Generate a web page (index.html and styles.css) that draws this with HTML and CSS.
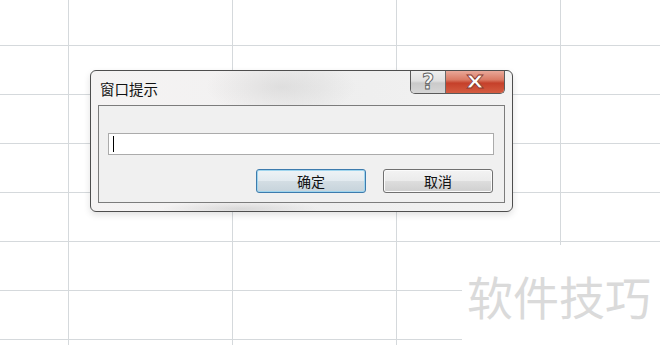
FILE: index.html
```html
<!DOCTYPE html>
<html lang="zh-CN">
<head>
<meta charset="utf-8">
<title>窗口提示</title>
<link rel="stylesheet" href="styles.css">
</head>
<body>
<div class="sheet">
  <div class="dialog">
    <div class="titlebar">
      <div class="title">窗口提示</div>
      <div class="caption-buttons">
        <div class="cap-btn help"><span>?</span></div>
        <div class="cap-btn close"><span>X</span></div>
      </div>
    </div>
    <div class="client">
      <div class="textbox"><span class="caret"></span></div>
      <div class="actions">
        <div class="btn default">确定</div>
        <div class="btn">取消</div>
      </div>
    </div>
  </div>
  <div class="watermark">软件技巧</div>
</div>
</body>
</html>
```

FILE: styles.css
```css
html, body {
  margin: 0;
  padding: 0;
  background: #ffffff;
}

.sheet {
  position: relative;
  width: 660px;
  height: 345px;
  overflow: hidden;
  background-color: #ffffff;
  background-image:
    linear-gradient(to right, #d5d9dc 1px, transparent 1px),
    linear-gradient(to bottom, #d5d9dc 1px, transparent 1px);
  background-size: 164px 100%, 100% 49px;
  background-position: 68px 0, 0 45px;
  font-family: "Noto Sans CJK SC", "Noto Sans", sans-serif;
}

.dialog {
  position: absolute;
  left: 90px;
  top: 70px;
  width: 423px;
  height: 142px;
  box-sizing: border-box;
  border: 1px solid #4e4e4e;
  border-radius: 6px;
  padding: 0 7px 8px 7px;
  display: flex;
  flex-direction: column;
  background:
    radial-gradient(ellipse 75px 30px at 190px 16px, rgba(175, 175, 175, 0.28), rgba(175, 175, 175, 0) 100%),
    radial-gradient(ellipse 80px 8px at 150px 138px, rgba(150, 150, 150, 0.28), rgba(150, 150, 150, 0) 100%),
    linear-gradient(to right, #f5f3f3 0%, #f2f1f1 40%, #eeeeee 55%, #f2f2f2 100%);
  box-shadow: 0 3px 7px rgba(0, 0, 0, 0.12);
}

.titlebar {
  height: 34px;
  display: flex;
  justify-content: space-between;
  align-items: flex-start;
  flex: none;
}

.title {
  margin-top: 8px;
  padding-left: 2px;
  font-size: 14.5px;
  line-height: 20px;
  color: #111;
}

.caption-buttons {
  display: flex;
  height: 22px;
  border: 1px solid #5a5a5a;
  border-top: none;
  border-radius: 0 0 5px 5px;
  overflow: hidden;
}

.cap-btn {
  height: 22px;
  display: flex;
  align-items: center;
  justify-content: center;
  font-family: "DejaVu Sans", sans-serif;
  color: #ffffff;
}

.help {
  width: 34px;
  background: linear-gradient(#efefef 0%, #e0e0e0 45%, #cacaca 55%, #d6d6d6 100%);
  border-right: 1px solid #6a6a6a;
}

.help span {
  font-size: 21px;
  font-weight: bold;
  color: #f6f6f6;
  -webkit-text-stroke: 0.9px #5e5e5e;
  line-height: 1;
  margin-top: 1px;
}

.close {
  width: 58px;
  background: linear-gradient(#e9a899 0%, #da7a64 40%, #c5402a 55%, #d45c41 100%);
}

.close span {
  font-size: 18px;
  font-weight: bold;
  line-height: 1;
  color: #ffffff;
  -webkit-text-stroke: 0.8px #8a3a2e;
  display: inline-block;
  transform: scaleX(1.25);
}

.client {
  flex: 1;
  border: 1px solid #7c7c7c;
  background: #f0f0f0;
  display: flex;
  flex-direction: column;
  padding: 27px 10px 0 9px;
}

.textbox {
  width: 386px;
  height: 22px;
  box-sizing: border-box;
  border: 1px solid #ababab;
  background: #ffffff;
  position: relative;
}

.caret {
  position: absolute;
  left: 4px;
  top: 2px;
  width: 1px;
  height: 16px;
  background: #000;
}

.actions {
  margin-top: 14px;
  display: flex;
  justify-content: flex-end;
  gap: 17px;
  padding-right: 1px;
}

.btn {
  width: 110px;
  height: 24px;
  box-sizing: border-box;
  border: 1px solid #707070;
  border-radius: 3px;
  background: linear-gradient(#f3f3f3 0%, #ebebeb 48%, #dddddd 52%, #cfcfcf 100%);
  box-shadow: inset 0 0 0 1px #fbfbfb;
  display: flex;
  align-items: center;
  justify-content: center;
  font-size: 14px;
  color: #111;
}

.btn.default {
  border-color: #3d7bad;
  background: linear-gradient(#eef3f6 0%, #e2eaef 48%, #d3dde3 52%, #c6d3db 100%);
  box-shadow: inset 0 0 0 1px #9fd5ee;
}

.watermark {
  position: absolute;
  left: 462px;
  top: 245px;
  right: 0;
  bottom: 0;
  background: #ffffff;
  padding: 27px 0 0 5px;
  font-size: 46px;
  line-height: 1;
  color: #dadada;
  white-space: nowrap;
}
```
